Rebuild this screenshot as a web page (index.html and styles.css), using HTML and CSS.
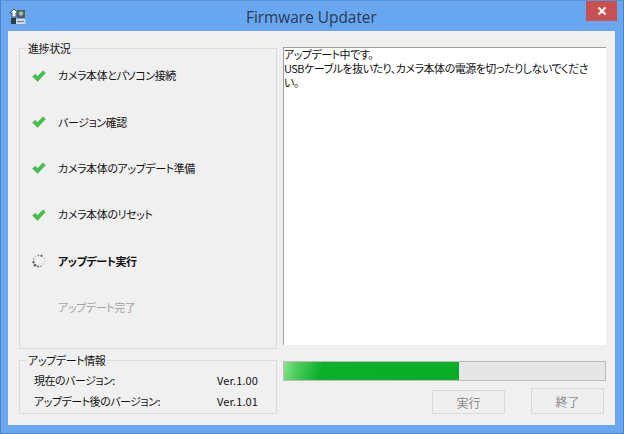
FILE: index.html
```html
<!DOCTYPE html>
<html lang="ja">
<head>
<meta charset="utf-8">
<title>Firmware Updater</title>
<link rel="stylesheet" href="styles.css">
</head>
<body>
<div class="window">
  <header class="titlebar">
    <svg class="app-icon" width="16" height="17" viewBox="0 0 16 17">
      <path d="M4 1 L8 5 H6 V9 H2 V5 H0 Z" fill="#f4f8fc" stroke="#26384e" stroke-width=".8"/>
      <rect x="7" y="2" width="8" height="8" fill="#4f5c60"/>
      <circle cx="11" cy="5.5" r="2.2" fill="#a9b4b4"/>
      <rect x="1" y="10" width="5" height="6" fill="#2a3f4c"/>
      <rect x="6" y="11" width="9.5" height="5" fill="#cfd8de"/>
      <rect x="7" y="13" width="7" height="1" fill="#6a7a84"/>
    </svg>
    <h1 class="title">Firmware Updater</h1>
    <button class="close" type="button" aria-label="閉じる">
      <svg width="10" height="10" viewBox="0 0 10 10"><path d="M1.5 1.5 L8.5 8.5 M8.5 1.5 L1.5 8.5" stroke="#fff" stroke-width="2"/></svg>
    </button>
  </header>
  <main class="client">
    <div class="left">
      <section class="group group-progress">
        <h2 class="legend">進捗状況</h2>
        <ul class="steps">
          <li class="step"><svg class="check" width="14" height="12" viewBox="0 0 14 12"><path d="M.6 6.6 L3.4 4.2 L5.6 6.4 L11 .8 L13.4 3 L5.6 11.4 Z" fill="#34c93f" stroke="#6f9c74" stroke-width=".6"/></svg><span>カメラ本体とパソコン接続</span></li>
          <li class="step"><svg class="check" width="14" height="12" viewBox="0 0 14 12"><path d="M.6 6.6 L3.4 4.2 L5.6 6.4 L11 .8 L13.4 3 L5.6 11.4 Z" fill="#34c93f" stroke="#6f9c74" stroke-width=".6"/></svg><span>バージョン確認</span></li>
          <li class="step"><svg class="check" width="14" height="12" viewBox="0 0 14 12"><path d="M.6 6.6 L3.4 4.2 L5.6 6.4 L11 .8 L13.4 3 L5.6 11.4 Z" fill="#34c93f" stroke="#6f9c74" stroke-width=".6"/></svg><span>カメラ本体のアップデート準備</span></li>
          <li class="step"><svg class="check" width="14" height="12" viewBox="0 0 14 12"><path d="M.6 6.6 L3.4 4.2 L5.6 6.4 L11 .8 L13.4 3 L5.6 11.4 Z" fill="#34c93f" stroke="#6f9c74" stroke-width=".6"/></svg><span>カメラ本体のリセット</span></li>
          <li class="step step-active"><svg class="check" width="14" height="14" viewBox="0 0 14 14">
            <g>
              <circle cx="9.5" cy="1.8" r="1.1" fill="#555"/><circle cx="12" cy="4.2" r=".8" fill="#bbb"/><circle cx="12.6" cy="7.2" r=".7" fill="#ccc"/>
              <circle cx="11.6" cy="10" r=".8" fill="#bbb"/><circle cx="9" cy="12.2" r=".9" fill="#999"/><circle cx="6" cy="12.6" r="1" fill="#666"/>
              <circle cx="3" cy="11.2" r="1.3" fill="#555"/><circle cx="1.6" cy="8.2" r="1.2" fill="#666"/><circle cx="1.6" cy="5.2" r=".9" fill="#999"/>
              <circle cx="3.4" cy="2.6" r=".8" fill="#bbb"/><circle cx="6.4" cy="1.4" r=".9" fill="#888"/>
            </g></svg><span>アップデート実行</span></li>
          <li class="step step-pending"><span class="check"></span><span>アップデート完了</span></li>
        </ul>
      </section>
      <section class="group group-info">
        <h2 class="legend">アップデート情報</h2>
        <dl class="info">
          <div class="info-row"><dt>現在のバージョン:</dt><dd>Ver.1.00</dd></div>
          <div class="info-row"><dt>アップデート後のバージョン:</dt><dd>Ver.1.01</dd></div>
        </dl>
      </section>
    </div>
    <div class="right">
      <div class="log"><p class="log-line">アップデート中です。</p><p class="log-line">USBケーブルを抜いたり、カメラ本体の電源を切ったりしないでくださ</p><p class="log-line">い。</p></div>
      <div class="bar"><div class="bar-fill"></div></div>
      <div class="actions">
        <button class="btn btn-run" type="button" disabled>実行</button>
        <button class="btn btn-end" type="button" disabled>終了</button>
      </div>
    </div>
  </main>
</div>
</body>
</html>
```

FILE: styles.css
```css
* { box-sizing: border-box; }
html, body { margin: 0; padding: 0; }
body {
  width: 624px;
  height: 434px;
  overflow: hidden;
  font-family: "Noto Sans CJK JP", "Noto Sans", sans-serif;
  font-size: 11px;
  letter-spacing: -.4px;
  font-feature-settings: "palt";
  color: #111;
}
.window {
  width: 624px;
  height: 434px;
  display: flex;
  flex-direction: column;
  background: #69a6f0;
  border: 1px solid #4a83c4;
  border-top-color: #5a93d8;
}
.titlebar {
  height: 30px;
  flex: none;
  display: flex;
  align-items: flex-start;
}
.app-icon { margin: 7px 0 0 9px; flex: none; }
.title {
  margin: 7px 0 0 220px;
  font-family: "Open Sans", sans-serif;
  font-feature-settings: normal;
  letter-spacing: 0;
  font-weight: 400;
  font-size: 15.4px;
  line-height: 20px;
  color: #2a3b52;
}
.close {
  margin: 0 6px 0 auto;
  width: 31px;
  height: 20px;
  padding: 0;
  border: 0;
  background: #c75050;
  display: flex;
  align-items: center;
  justify-content: center;
}
.client {
  margin: 0 8px 8px 7px;
  flex: 1;
  background: #f0f0f0;
  display: flex;
  gap: 6px;
  padding: 16px 9px 0 11px;
}
.left {
  width: 258px;
  flex: none;
  display: flex;
  flex-direction: column;
  gap: 11px;
  padding-top: 1px;
}
.group {
  position: relative;
  border: 1px solid #dcdcdc;
}
.group-progress { height: 301px; padding-top: 3.5px; }
.group-info { height: 54px; }
.legend {
  position: absolute;
  top: -8px;
  left: 6px;
  margin: 0;
  padding: 0 2px;
  background: #f0f0f0;
  font-size: 11px;
  font-weight: 400;
  line-height: 15px;
}
.steps {
  list-style: none;
  margin: 0;
  padding: 0;
  display: grid;
  grid-auto-rows: 46.4px;
}
.step {
  display: flex;
  align-items: center;
  padding-left: 12px;
  gap: 12px;
  line-height: 15px;
}
.check { width: 14px; flex: none; }
.step-active { font-weight: 700; }
.step-pending { color: #a3a3a3; }
.info { margin: 0; padding: 12px 18px 0 14px; }
.info-row {
  display: flex;
  justify-content: space-between;
  height: 21px;
  line-height: 15px;
}
.info-row dt, .info-row dd { margin: 0; }
.info-row dt { letter-spacing: -.5px; }
.info-row dd { letter-spacing: .1px; }
.right {
  width: 323px;
  flex: none;
  display: flex;
  flex-direction: column;
}
.log {
  height: 298px;
  background: #fff;
  border-left: 1px solid #a0a0a0;
  border-top: 1px solid #a0a0a0;
  white-space: nowrap;
  overflow: hidden;
  letter-spacing: -.5px;
}
.log-line { margin: 0; height: 14px; line-height: 12px; }
.bar {
  margin-top: 16px;
  height: 20px;
  background: #e6e6e6;
  border: 1px solid #bcbcbc;
}
.bar-fill {
  height: 100%;
  width: 175px;
  background:
    linear-gradient(105deg, #86e68c 0, #4ccc5c 14px, #0bb02a 38px, #08ae27 100%);
}
.actions {
  margin-top: 6px;
  height: 27px;
  display: flex;
  align-items: flex-end;
  justify-content: flex-end;
  gap: 26px;
  padding-right: 2px;
}
.btn {
  font-family: inherit;
  font-size: 12px;
  letter-spacing: 0;
  font-feature-settings: inherit;
  color: #8a8a8a;
  background: #efefef;
  border: 1px solid #d9d9d9;
  padding: 0;
}
.btn-run { width: 73px; height: 24px; }
.btn-end { width: 73px; height: 26px; }
```
